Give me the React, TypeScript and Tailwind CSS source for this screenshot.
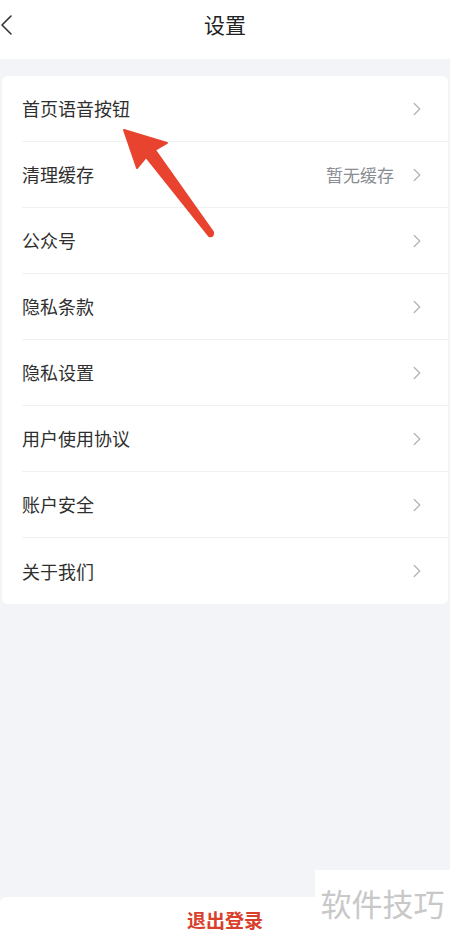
import { ChevronRight } from "lucide-react";

const rows: { label: string; value?: string }[] = [
  { label: "首页语音按钮" },
  { label: "清理缓存", value: "暂无缓存" },
  { label: "公众号" },
  { label: "隐私条款" },
  { label: "隐私设置" },
  { label: "用户使用协议" },
  { label: "账户安全" },
  { label: "关于我们" },
];

const font = { fontFamily: '"Noto Sans CJK SC", "Noto Sans", sans-serif' };

export default function App() {
  return (
    <div className="relative flex h-[937px] w-[450px] flex-col overflow-hidden bg-[#f2f4f7]" style={font}>
      {/* header */}
      <div className="relative flex h-[59px] items-center justify-center bg-white">
        <svg className="absolute left-0 top-[14px]" width="14" height="22" viewBox="0 0 14 22" fill="none">
          <path d="M11 2 L2 11 L11 20" stroke="#333" strokeWidth="1.6" strokeLinecap="round" strokeLinejoin="round" />
        </svg>
        <h1 className="-mt-[9px] text-[21px] text-[#222]">设置</h1>
      </div>

      <div className="h-[17px]" />

      {/* list */}
      <div className="mx-[2px] rounded-md bg-white">
        {rows.map((r, i) => (
          <div key={r.label} className="flex h-[66px] items-center pl-[20px]">
            <div
              className={
                "flex h-full flex-1 items-center pr-[20px] " +
                (i < rows.length - 1 ? "border-b border-[#f0f1f3]" : "")
              }
            >
              <span className="flex-1 text-[18px] text-[#2f2f2f]">{r.label}</span>
              {r.value && <span className="mr-[12px] text-[17px] text-[#8a8d93]">{r.value}</span>}
              <ChevronRight className="h-[22px] w-[22px] text-[#b3b5b9]" strokeWidth={1.4} />
            </div>
          </div>
        ))}
      </div>

      <div className="flex-1" />

      {/* logout */}
      <div className="flex h-[40px] items-start justify-center rounded-t-md bg-white pt-[11px]">
        <span className="text-[19px] font-bold leading-[24px] text-[#d8402b]">退出登录</span>
      </div>

      {/* watermark */}
      <div className="absolute bottom-0 right-0 flex h-[67px] w-[135px] items-center justify-center bg-white">
        <span className="text-[31px] text-[#c8c8c8]">软件技巧</span>
      </div>

      {/* annotation arrow */}
      <svg className="absolute left-[118px] top-[125px]" width="100" height="118" viewBox="0 0 100 118">
        <path
          d="M6 5 L49 18 L37 25 L95 107 Q96 112 91 111 L28 32 L19 43 Z"
          fill="#e8432e"
          strokeLinejoin="round"
          stroke="#e8432e"
          strokeWidth="2"
        />
      </svg>
    </div>
  );
}
